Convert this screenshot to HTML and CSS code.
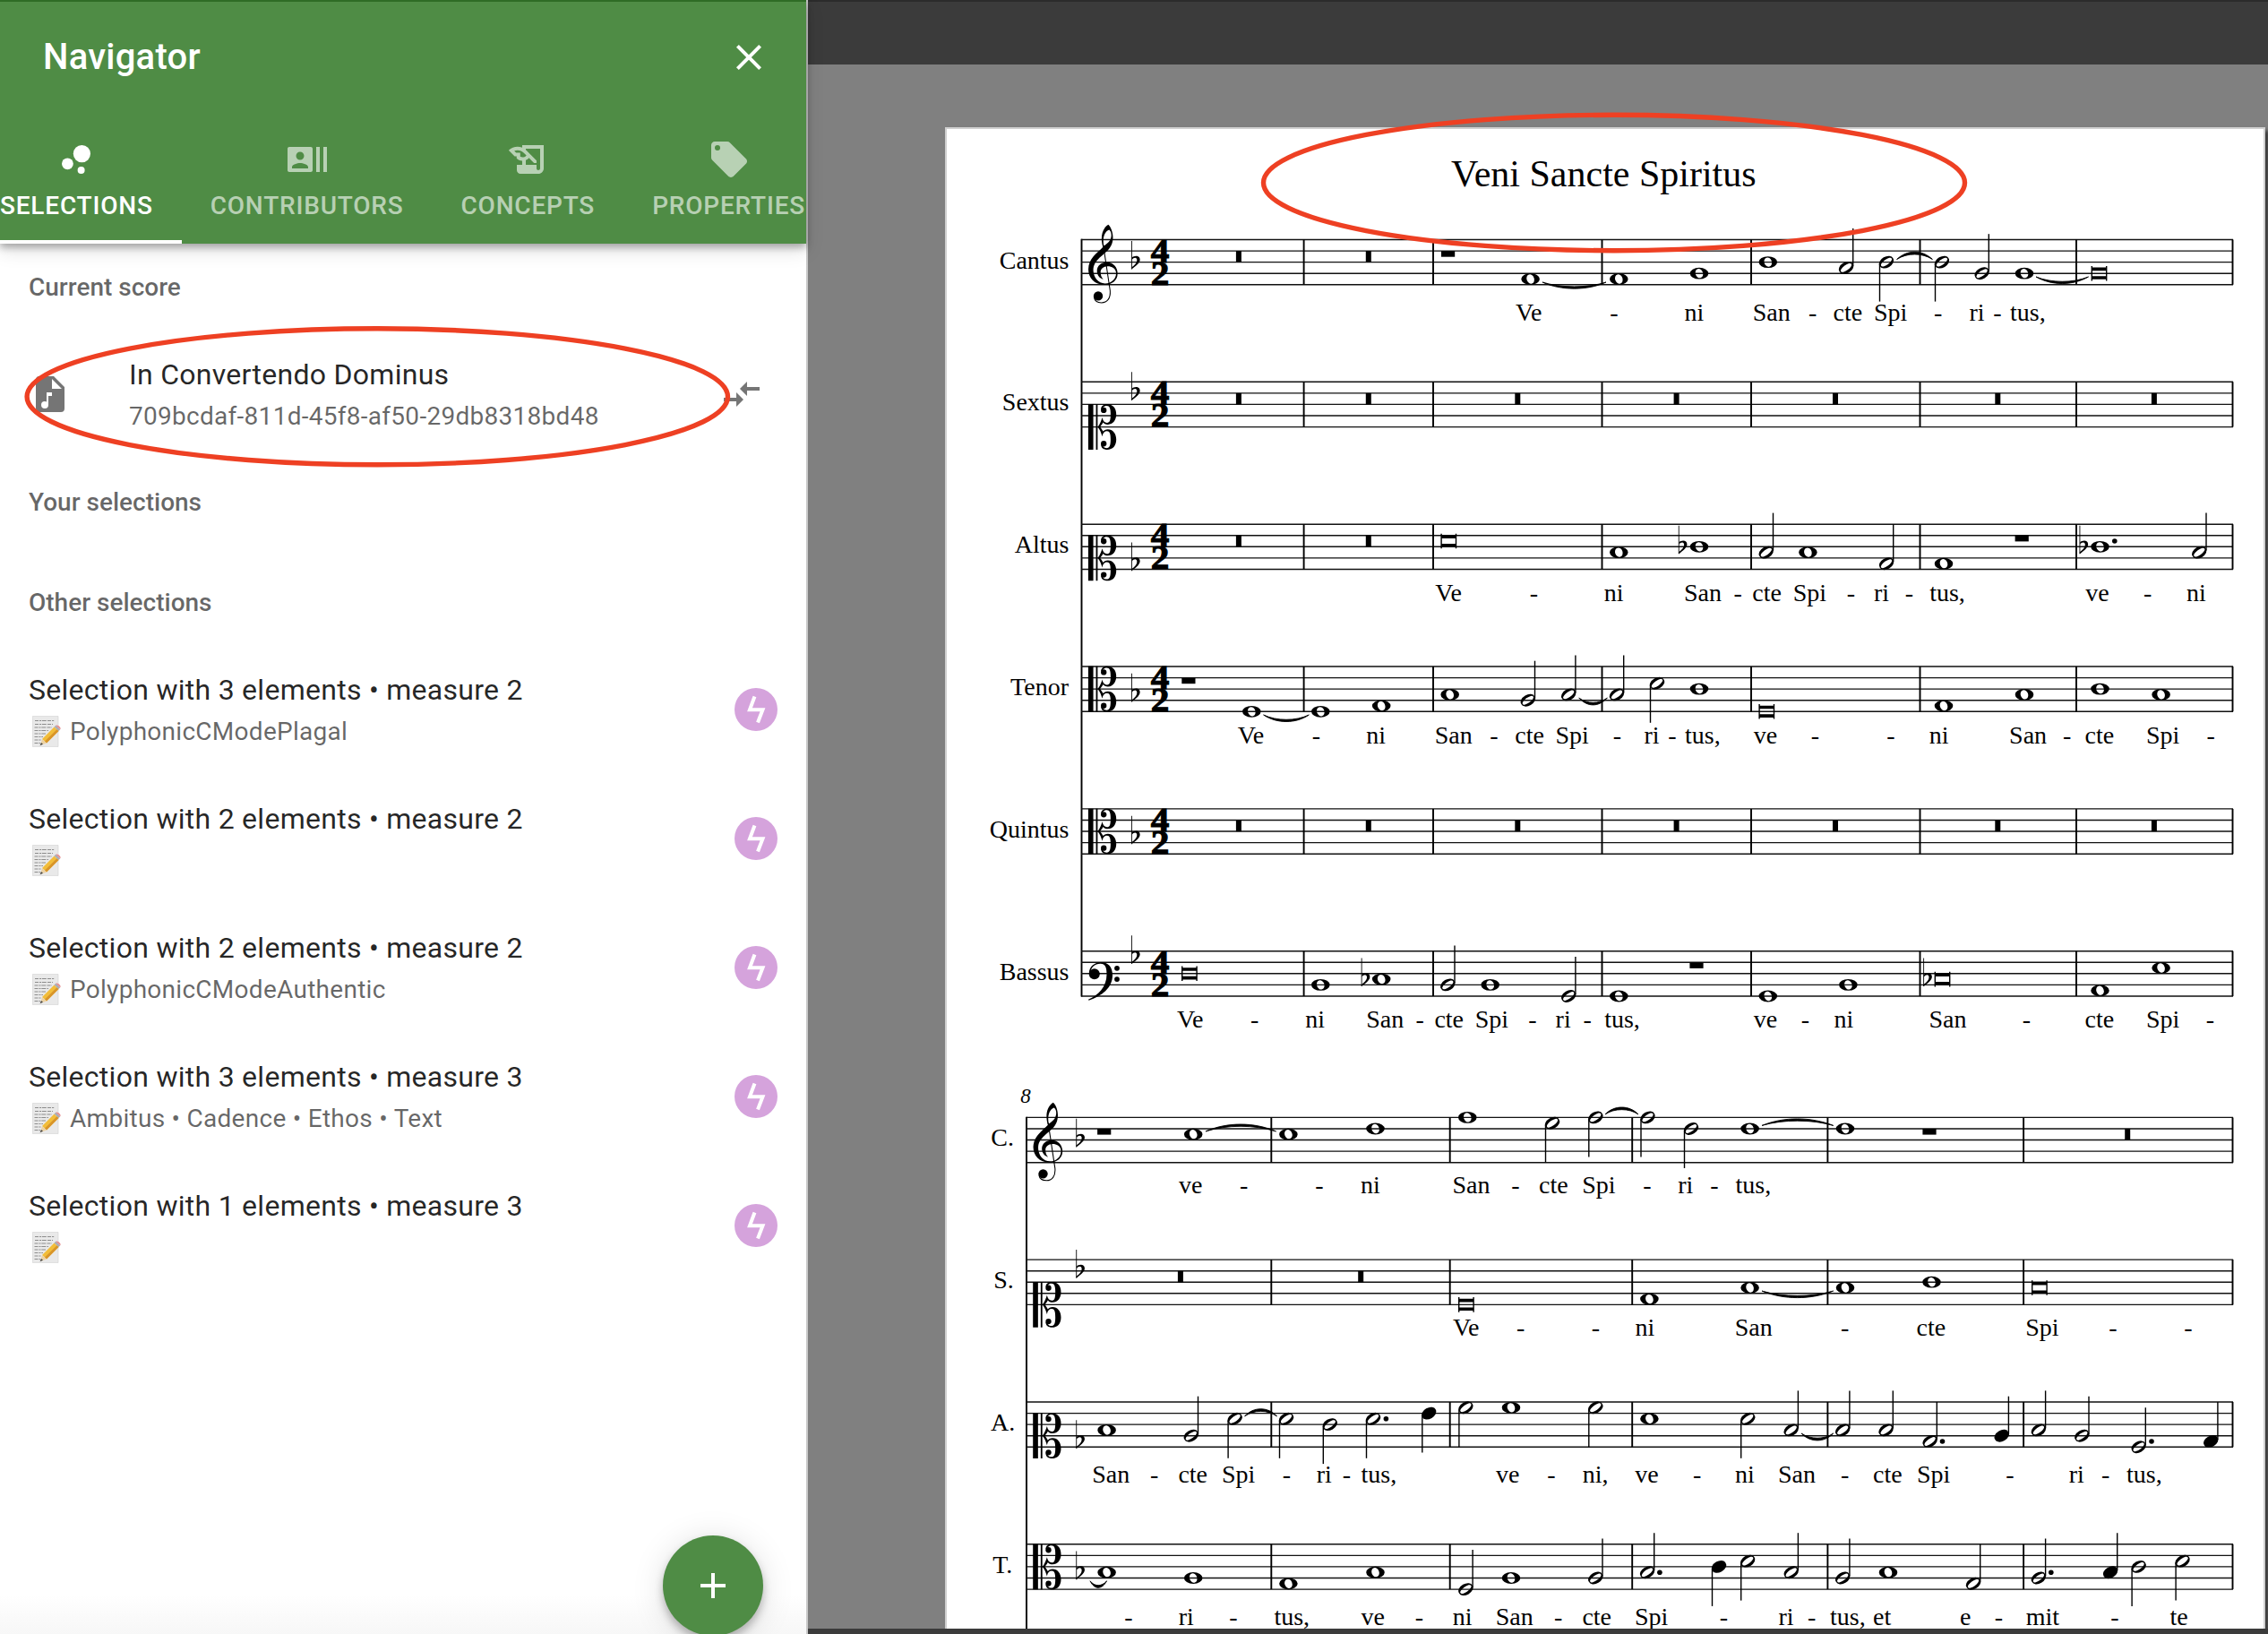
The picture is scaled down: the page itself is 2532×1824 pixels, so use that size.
FILE: index.html
```html
<!DOCTYPE html>
<html lang="en">
<head>
<meta charset="utf-8">
<title>Navigator</title>
<link rel="stylesheet" href="styles.css">
</head>
<body>
<svg class="defs" width="0" height="0" aria-hidden="true">
  <defs>
    <!-- note heads, centred on the origin -->
    <path id="w" fill-rule="evenodd" d="M-10.3 0A10.3 6.4 0 1 0 10.3 0A10.3 6.4 0 1 0 -10.3 0ZM-1.7 -4.9A5.2 3.9 70 1 0 1.7 4.9A5.2 3.9 70 1 0 -1.7 -4.9Z"/>
    <path id="h" fill-rule="evenodd" d="M-7.4 4.3A8.6 5.6 -30 1 0 7.4 -4.3A8.6 5.6 -30 1 0 -7.4 4.3ZM-5.8 4.2A7.2 2.6 -36 1 0 5.8 -4.2A7.2 2.6 -36 1 0 -5.8 4.2Z"/>
    <path id="q" d="M-7.4 4.3A8.6 5.6 -30 1 0 7.4 -4.3A8.6 5.6 -30 1 0 -7.4 4.3Z"/>
    <path id="up" d="M7 -2V-44H8.4V-2Z"/>
    <path id="dn" d="M-8.2 2V44H-6.8V2Z"/>
    <g id="hu"><use href="#h"/><use href="#up"/></g>
    <g id="hd"><use href="#h"/><use href="#dn"/></g>
    <g id="qu"><use href="#q"/><use href="#up"/></g>
    <g id="qd"><use href="#q"/><use href="#dn"/></g>
    <path id="b" d="M-8.9 -8.3h1.4v1.7h15v-1.7h1.4v16.6h-1.4v-1.7h-15v1.7h-1.4ZM-7.5 -3V3H7.5V-3Z" fill-rule="evenodd"/>
    <circle id="d" r="2.8"/>
    <!-- rests hang from the second staff line -->
    <path id="br" d="M-3 12.6h6v12.6h-6Z"/>
    <path id="wr" d="M-7.6 12.6h15.2v6.6h-15.2Z"/>
    <g id="f" transform="scale(.333)">
      <path d="M0 -71h2.6v95h-2.6Z"/>
      <path d="M2 -15C8 -22 29 -25 29 -8C29 3 14 14 1 24V18C12 10 19 2 19 -6C19 -18 8 -16 2 -8Z"/>
    </g>
    <g id="gc" transform="scale(.333) translate(-59 -67)">
      <path fill-rule="evenodd" d="M109 92C101 66 102 32 127 17C141 30 148 62 137 86C126 112 88 126 78 156C71 186 90 214 116 214C140 214 154 196 153 178C152 162 138 156 125 156C110 156 101 165 101 176C101 186 104 194 110 200C98 197 89 186 89 172C89 155 103 143 122 143C144 143 158 160 158 181C158 203 140 218 115 218C80 218 60 195 60 166C61 130 88 114 109 92ZM112 88C107 66 112 40 130 34C139 42 139 58 132 70C127 78 119 83 112 88Z"/>
      <path fill="none" stroke="#000" stroke-width="3.2" d="M110 85L133 238C135 264 123 278.500 104 278.500C92 278.500 81 272 79 260"/>
      <circle cx="93" cy="256" r="15.500"/>
    </g>
    <g id="ch">
      <path d="M43 -58C42 -70 52 -76 64 -76C82 -76 94 -64 94 -42C94 -22 82 -8 66 -8C58 -8 53 -11 50 -15C46 -8 42 -3 39 1H31C40 -10 44 -22 47 -32C49 -20 55 -14 63 -14C72 -14 75 -22 75 -42C75 -62 72 -71 62 -71C57 -71 53 -69 51 -66Z"/>
      <circle cx="52" cy="-56" r="9.500"/>
    </g>
    <g id="cc" transform="scale(.333)">
      <path d="M0 -76h17v152h-17ZM26 -76h5.500v152h-5.500Z"/>
      <use href="#ch"/><use href="#ch" transform="scale(1 -1)"/>
    </g>
    <g id="fc">
      <circle cx="6.800" cy=".4" r="6"/>
      <path d="M.8 0C.8 -8 7 -12.600 14 -12.600C22 -12.600 27 -8 27 2C27 16 15 25 .5 30L0 29C11 24 20.500 15 20.500 1C20.500 -7 19 -11 13.500 -11C7 -11 2.500 -7 2.500 0Z"/>
      <circle cx="32" cy="-6" r="2.900"/><circle cx="32" cy="6.300" r="2.900"/>
    </g>
    <g id="ts" class="meter" transform="scale(1.1 1)"><text x="0" y="25">4</text><text x="0" y="50.200">2</text></g>
    <!-- staves with their bar lines -->
    <g id="s1" class="lines">
      <path d="M1207 0H2493M1207 12.600H2493M1207 25.100H2493M1207 37.700H2493M1207 50.300H2493"/>
      <path class="bar" d="M1455.600 0V50.300M1600 0V50.300M1788.500 0V50.300M1955 0V50.300M2143.500 0V50.300M2318 0V50.300M2492.500 0V50.300"/>
    </g>
    <g id="s2" class="lines">
      <path d="M1146 0H2493M1146 12.600H2493M1146 25.100H2493M1146 37.700H2493M1146 50.300H2493"/>
      <path class="bar" d="M1419.300 0V50.300M1618.700 0V50.300M1822.200 0V50.300M2040.400 0V50.300M2259.100 0V50.300M2492.500 0V50.300"/>
    </g>
    <!-- interface icons -->
    <g id="memo">
      <path fill="#e9e9e9" stroke="#d2d2d2" stroke-width=".6" d="M.5 .5H29V34.500H.5Z"/>
      <path fill="none" stroke="#8d8d8d" stroke-width="1" stroke-dasharray="4 1 2 .8 5 1.200" d="M3 5.500H25M3 9.500H23M2.500 13H22M2.500 16.500H18M2.500 20H15M2.500 23.500H12M2.500 27H10M2.500 30.500H9"/>
      <path fill="#f2bd3a" d="M11 26L24.500 12.500L29.500 17L16 30.500Z"/>
      <path fill="#d8942a" d="M14 28.500L27.500 15.200L29.500 17L16 30.500Z"/>
      <path fill="#ecd2a4" d="M11 26L16 30.500L9 33Z"/>
      <path fill="#444" d="M10 30L12 31.800L8.500 33.300Z"/>
      <path fill="#a9adb5" d="M24.500 12.500L26.300 10.800L31.200 15.300L29.500 17Z"/>
      <path fill="#e58a8c" d="M26.300 10.800C28 9.500 33 13 31.200 15.300Z"/>
    </g>
    <g id="bolt">
      <circle cx="24" cy="24" r="24" fill="#d5a3dc"/>
      <path fill="none" stroke="#fff" stroke-width="4" d="M22.500 9.500L17 24.200H31.500L26 38.500"/>
    </g>
  </defs>
</svg>

<div class="app">
  <aside class="nav">
    <header class="nav-head">
      <div class="nav-title">
        <h1>Navigator</h1>
        <svg class="icon" viewBox="0 0 24 24"><path d="M19 6.410L17.590 5 12 10.590 6.410 5 5 6.410 10.590 12 5 17.590 6.410 19 12 13.410 17.590 19 19 17.590 13.410 12z"/></svg>
      </div>
      <nav class="tabs">
        <div class="tab active">
          <svg class="icon" viewBox="0 0 24 24"><circle cx="7.200" cy="14.400" r="3.200"/><circle cx="14.800" cy="18" r="2"/><circle cx="15.200" cy="8.800" r="4.800"/></svg>
          <span>SELECTIONS</span>
        </div>
        <div class="tab">
          <svg class="icon" viewBox="0 0 24 24"><path d="M21 5v14h2V5h-2zm-4 14h2V5h-2v14zM14 5H2c-.55 0-1 .45-1 1v12c0 .55.45 1 1 1h12c.55 0 1-.45 1-1V6c0-.55-.45-1-1-1zM8 7.750c1.240 0 2.250 1.010 2.250 2.250S9.240 12.250 8 12.250 5.750 11.240 5.750 10 6.760 7.750 8 7.750zM12.500 17h-9v-.75c0-1.500 3-2.250 4.500-2.250s4.500.75 4.500 2.250V17z"/></svg>
          <span>CONTRIBUTORS</span>
        </div>
        <div class="tab">
          <svg class="icon" viewBox="0 0 24 24"><path d="M9 4v1.380c-.83-.33-1.720-.5-2.610-.5-1.790 0-3.580.68-4.950 2.050l3.330 3.330h1.110v1.110c.86.86 1.980 1.310 3.110 1.360V15H6v3c0 1.100.9 2 2 2h10c1.660 0 3-1.340 3-3V4H9zm-1.110 6.410V8.260H5.610L4.570 7.220a5.070 5.070 0 0 1 1.820-.34c1.340 0 2.590.52 3.540 1.460l1.410 1.410-.2.2c-.51.51-1.190.8-1.920.8-.47 0-.93-.12-1.330-.34zM19 17c0 .55-.45 1-1 1s-1-.45-1-1v-2h-6v-2.590c.57-.23 1.100-.57 1.560-1.030l.2-.2L15.590 14H17v-1.410l-6-5.970V6h8v11z"/></svg>
          <span>CONCEPTS</span>
        </div>
        <div class="tab">
          <svg class="icon" viewBox="0 0 24 24"><path d="M5.500,7A1.500,1.500 0 0,1 4,5.500A1.500,1.500 0 0,1 5.500,4A1.500,1.500 0 0,1 7,5.500A1.500,1.500 0 0,1 5.500,7M21.410,11.580L12.410,2.580C12.050,2.220 11.550,2 11,2H4C2.890,2 2,2.890 2,4V11C2,11.550 2.220,12.050 2.590,12.410L11.580,21.410C11.950,21.770 12.450,22 13,22C13.550,22 14.050,21.770 14.410,21.410L21.410,14.410C21.780,14.050 22,13.550 22,13C22,12.440 21.770,11.940 21.410,11.580Z"/></svg>
          <span>PROPERTIES</span>
        </div>
      </nav>
    </header>

    <section class="group">
      <h2>Current score</h2>
      <div class="item current">
        <svg class="icon" viewBox="0 0 24 24"><path d="M14,2H6A2,2 0 0,0 4,4V20A2,2 0 0,0 6,22H18A2,2 0 0,0 20,20V8L14,2M13,13H11V18A2,2 0 0,1 9,20A2,2 0 0,1 7,18A2,2 0 0,1 9,16C9.400,16 9.700,16.100 10,16.300V11H13V13M13,9V3.500L18.500,9H13Z"/></svg>
        <div class="text"><p>In Convertendo Dominus</p><small>709bcdaf-811d-45f8-af50-29db8318bd48</small></div>
        <svg class="icon" viewBox="0 0 24 24"><path d="M9.010 14H2v2h7.010v3L13 15l-3.990-4v3zm5.980-1v-3H22V8h-7.010V5L11 9l3.990 4z"/></svg>
      </div>
    </section>
    <section class="group yours"><h2>Your selections</h2></section>
    <section class="group">
      <h2>Other selections</h2>
      <div class="item">
        <div class="text"><p>Selection with 3 elements • measure 2</p><small><svg class="memo" viewBox="0 0 34 36"><use href="#memo"/></svg>PolyphonicCModePlagal</small></div>
        <svg class="badge" viewBox="0 0 48 48"><use href="#bolt"/></svg>
      </div>
      <div class="item">
        <div class="text"><p>Selection with 2 elements • measure 2</p><small><svg class="memo" viewBox="0 0 34 36"><use href="#memo"/></svg></small></div>
        <svg class="badge" viewBox="0 0 48 48"><use href="#bolt"/></svg>
      </div>
      <div class="item">
        <div class="text"><p>Selection with 2 elements • measure 2</p><small><svg class="memo" viewBox="0 0 34 36"><use href="#memo"/></svg>PolyphonicCModeAuthentic</small></div>
        <svg class="badge" viewBox="0 0 48 48"><use href="#bolt"/></svg>
      </div>
      <div class="item">
        <div class="text"><p>Selection with 3 elements • measure 3</p><small><svg class="memo" viewBox="0 0 34 36"><use href="#memo"/></svg>Ambitus • Cadence • Ethos • Text</small></div>
        <svg class="badge" viewBox="0 0 48 48"><use href="#bolt"/></svg>
      </div>
      <div class="item">
        <div class="text"><p>Selection with 1 elements • measure 3</p><small><svg class="memo" viewBox="0 0 34 36"><use href="#memo"/></svg></small></div>
        <svg class="badge" viewBox="0 0 48 48"><use href="#bolt"/></svg>
      </div>
    </section>
    <div class="fab"><svg class="icon" viewBox="0 0 24 24"><path d="M19 13h-6v6h-2v-6H5v-2h6V5h2v6h6v2z"/></svg></div>
  </aside>

  <main class="viewer">
    <div class="toolbar"></div>
    <div class="canvas">
      <div class="sheet">
        <svg class="score" viewBox="1057 144 1470 1674">
          <text class="title" x="1620" y="208.300">Veni Sancte Spiritus</text>
          <path class="edge" d="M1207.500 266.800V1112.600M1146 1246.700V1820"/>

          <g transform="translate(0 267.500)">
            <text class="part" x="1193.500" y="32.500">Cantus</text>
            <use href="#s1"/><use href="#gc" transform="translate(1214.700 0)"/><use href="#f" transform="translate(1263 25.100)"/><use href="#ts" x="1295"/>
            <use href="#br" x="1382.900"/><use href="#br" x="1527.800"/><use href="#wr" x="1616.600"/>
            <use href="#w" x="1708.600" y="44"/><use href="#w" x="1807.300" y="44"/><use href="#w" x="1897" y="37.700"/>
            <use href="#w" x="1973.800" y="25.100"/><use href="#hu" x="2061" y="31.400"/><use href="#hd" x="2106" y="25.100"/>
            <use href="#hd" x="2168" y="25.100"/><use href="#hu" x="2212.600" y="37.700"/><use href="#w" x="2260" y="37.700"/><use href="#b" x="2343.500" y="37.700"/>
            <path class="tie" d="M1722 47.500C1742 57 1773 57 1793 47.500C1773 54 1742 54 1722 47.500ZM2117.600 22C2129 11 2146 11 2157.400 22C2146 14.500 2129 14.500 2117.600 22ZM2273 41.500C2290 51.500 2314.500 51.500 2331.500 41.500C2314.500 48.500 2290 48.500 2273 41.500Z"/>
            <text class="lyric" y="90.200"><tspan x="1692">Ve</tspan><tspan class="h" x="1802">-</tspan><tspan x="1880.500">ni</tspan><tspan x="1956.800">San</tspan><tspan class="h" x="2023.600">-</tspan><tspan x="2046.500">cte</tspan><tspan x="2092">Spi</tspan><tspan class="h" x="2163.700">-</tspan><tspan x="2198.500">ri</tspan><tspan class="h" x="2229.900">-</tspan><tspan x="2244">tus,</tspan></text>
          </g>

          <g transform="translate(0 426.300)">
            <text class="part" x="1193.500" y="31.500">Sextus</text>
            <use href="#s1"/><use href="#cc" transform="translate(1214.900 50.300)"/><use href="#f" transform="translate(1263 12.600)"/><use href="#ts" x="1295"/>
            <use href="#br" x="1382.900"/><use href="#br" x="1527.800"/><use href="#br" x="1694.300"/><use href="#br" x="1871.600"/><use href="#br" x="2049"/><use href="#br" x="2230.300"/><use href="#br" x="2404.900"/>
          </g>

          <g transform="translate(0 585.200)">
            <text class="part" x="1193.500" y="31.500">Altus</text>
            <use href="#s1"/><use href="#cc" transform="translate(1214.900 37.700)"/><use href="#f" transform="translate(1263 44)"/><use href="#ts" x="1295"/>
            <use href="#br" x="1382.900"/><use href="#br" x="1527.800"/><use href="#b" x="1617.300" y="18.800"/>
            <use href="#w" x="1807.300" y="31.400"/><use href="#f" transform="translate(1873.800 25.100)"/><use href="#w" x="1897" y="25.100"/>
            <use href="#hu" x="1971.800" y="31.400"/><use href="#w" x="2018.400" y="31.400"/><use href="#hu" x="2106" y="44"/>
            <use href="#w" x="2170" y="44"/><use href="#wr" x="2257.200"/>
            <use href="#f" transform="translate(2321.500 25.100)"/><use href="#w" x="2344.500" y="25.100"/><use href="#d" x="2360.800" y="18.800"/><use href="#hu" x="2455.300" y="31.400"/>
            <text class="lyric" y="85.600"><tspan x="1602.300">Ve</tspan><tspan class="h" x="1712.500">-</tspan><tspan x="1790.700">ni</tspan><tspan x="1880">San</tspan><tspan class="h" x="1940.200">-</tspan><tspan x="1956.300">cte</tspan><tspan x="2001.800">Spi</tspan><tspan class="h" x="2066.300">-</tspan><tspan x="2092">ri</tspan><tspan class="h" x="2131.500">-</tspan><tspan x="2154.200">tus,</tspan><tspan x="2328.300">ve</tspan><tspan class="h" x="2397.700">-</tspan><tspan x="2441">ni</tspan></text>
          </g>

          <g transform="translate(0 744)">
            <text class="part" x="1193" y="31.500">Tenor</text>
            <use href="#s1"/><use href="#cc" transform="translate(1214.900 25.100)"/><use href="#f" transform="translate(1263 31.400)"/><use href="#ts" x="1295"/>
            <use href="#wr" x="1326.900"/><use href="#w" x="1397.300" y="50.300"/><use href="#w" x="1474.300" y="50.300"/><use href="#w" x="1542.200" y="44"/>
            <use href="#w" x="1618.700" y="31.400"/><use href="#hu" x="1705.800" y="37.700"/><use href="#hu" x="1751.200" y="31.400"/>
            <use href="#hu" x="1805" y="31.400"/><use href="#hd" x="1850" y="18.800"/><use href="#w" x="1897" y="25.100"/>
            <use href="#b" x="1972.300" y="50.300"/><use href="#w" x="2170" y="44"/><use href="#w" x="2260" y="31.400"/><use href="#w" x="2344.500" y="25.100"/><use href="#w" x="2412.600" y="31.400"/>
            <path class="tie" d="M1410.600 54C1425 64 1447 64 1461.300 54C1447 61 1425 61 1410.600 54ZM1762.700 35C1772 45.500 1785 45.500 1794.400 35C1785 42 1772 42 1762.700 35Z"/>
            <text class="lyric" y="86"><tspan x="1381.700">Ve</tspan><tspan class="h" x="1469.500">-</tspan><tspan x="1525.200">ni</tspan><tspan x="1601.800">San</tspan><tspan class="h" x="1668">-</tspan><tspan x="1691.300">cte</tspan><tspan x="1736.500">Spi</tspan><tspan class="h" x="1805.400">-</tspan><tspan x="1835.400">ri</tspan><tspan class="h" x="1866.800">-</tspan><tspan x="1881">tus,</tspan><tspan x="1957.700">ve</tspan><tspan class="h" x="2026.500">-</tspan><tspan class="h" x="2110.900">-</tspan><tspan x="2153.700">ni</tspan><tspan x="2243.100">San</tspan><tspan class="h" x="2307.600">-</tspan><tspan x="2327.600">cte</tspan><tspan x="2396">Spi</tspan><tspan class="h" x="2468.200">-</tspan></text>
          </g>

          <g transform="translate(0 902.900)">
            <text class="part" x="1193.500" y="32">Quintus</text>
            <use href="#s1"/><use href="#cc" transform="translate(1214.900 25.100)"/><use href="#f" transform="translate(1263 31.400)"/><use href="#ts" x="1295"/>
            <use href="#br" x="1382.900"/><use href="#br" x="1527.800"/><use href="#br" x="1694.300"/><use href="#br" x="1871.600"/><use href="#br" x="2049"/><use href="#br" x="2230.300"/><use href="#br" x="2404.900"/>
          </g>

          <g transform="translate(0 1061.700)">
            <text class="part" x="1193.500" y="32">Bassus</text>
            <use href="#s1"/><use href="#fc" transform="translate(1215 25.100)"/><use href="#f" transform="translate(1263 6.300)"/><use href="#ts" x="1295"/>
            <use href="#b" x="1327.900" y="25.100"/><use href="#w" x="1474.300" y="37.700"/><use href="#f" transform="translate(1519.700 31.400)"/><use href="#w" x="1542.200" y="31.400"/>
            <use href="#hu" x="1616.300" y="37.700"/><use href="#w" x="1663.700" y="37.700"/><use href="#hu" x="1751.200" y="50.300"/>
            <use href="#w" x="1807.300" y="50.300"/><use href="#wr" x="1894"/><use href="#w" x="1973.800" y="50.300"/><use href="#w" x="2063.400" y="37.700"/>
            <use href="#f" transform="translate(2147.200 31.400)"/><use href="#b" x="2168.500" y="31.400"/><use href="#w" x="2344.500" y="44"/><use href="#w" x="2412.600" y="18.800"/>
            <text class="lyric" y="85.200"><tspan x="1314">Ve</tspan><tspan class="h" x="1400.600">-</tspan><tspan x="1457.300">ni</tspan><tspan x="1525.200">San</tspan><tspan class="h" x="1585.200">-</tspan><tspan x="1601.400">cte</tspan><tspan x="1646.700">Spi</tspan><tspan class="h" x="1711">-</tspan><tspan x="1736.600">ri</tspan><tspan class="h" x="1772.200">-</tspan><tspan x="1791.200">tus,</tspan><tspan x="1957.700">ve</tspan><tspan class="h" x="2015.500">-</tspan><tspan x="2047.400">ni</tspan><tspan x="2153.500">San</tspan><tspan class="h" x="2262.500">-</tspan><tspan x="2327.600">cte</tspan><tspan x="2396">Spi</tspan><tspan class="h" x="2467.300">-</tspan></text>
          </g>

          <text class="number" x="1139.300" y="1231.300">8</text>
          <g transform="translate(0 1247.400)">
            <text class="abbr" x="1106.300" y="32">C.</text>
            <use href="#s2"/><use href="#gc" transform="translate(1153.200 0)"/><use href="#f" transform="translate(1201.300 25.100)"/>
            <use href="#wr" x="1232.700"/><use href="#w" x="1332.200" y="18.800"/><use href="#w" x="1438.400" y="18.800"/><use href="#w" x="1535.500" y="12.600"/>
            <use href="#w" x="1638.300" y="0"/><use href="#hd" x="1733" y="6.300"/><use href="#hd" x="1781.300" y="0"/>
            <use href="#hd" x="1839.500" y="0"/><use href="#hd" x="1888" y="12.600"/><use href="#w" x="1953.600" y="12.600"/>
            <use href="#w" x="2060" y="12.600"/><use href="#wr" x="2154"/><use href="#br" x="2375.200"/>
            <path class="tie" d="M1346 15.500C1370 5 1400 5 1424.500 15.500C1400 8 1370 8 1346 15.500ZM1792 -3.500C1802 -14 1819 -14 1829 -3.500C1819 -10.500 1802 -10.500 1792 -3.500ZM1967 9C1991 -1 2022 -1 2046.700 9C2022 2 1991 2 1967 9Z"/>
            <text class="lyric" y="84.800"><tspan x="1316.100">ve</tspan><tspan class="h" x="1388.600">-</tspan><tspan class="h" x="1472.800">-</tspan><tspan x="1519">ni</tspan><tspan x="1621.400">San</tspan><tspan class="h" x="1691.900">-</tspan><tspan x="1718">cte</tspan><tspan x="1766.300">Spi</tspan><tspan class="h" x="1839">-</tspan><tspan x="1873.300">ri</tspan><tspan class="h" x="1913.800">-</tspan><tspan x="1937.500">tus,</tspan></text>
          </g>

          <g transform="translate(0 1406.100)">
            <text class="abbr" x="1109.300" y="31.500">S.</text>
            <use href="#s2"/><use href="#cc" transform="translate(1153.200 50.300)"/><use href="#f" transform="translate(1201.300 12.600)"/>
            <use href="#br" x="1317.900"/><use href="#br" x="1519.200"/><use href="#b" x="1636.900" y="50.300"/>
            <use href="#w" x="1841.400" y="44"/><use href="#w" x="1953.600" y="31.400"/><use href="#w" x="2060" y="31.400"/><use href="#w" x="2156.500" y="25.100"/><use href="#b" x="2276.900" y="31.400"/>
            <path class="tie" d="M1967 35C1991 45 2022 45 2046.700 35C2022 42 1991 42 1967 35Z"/>
            <text class="lyric" y="84.800"><tspan x="1622">Ve</tspan><tspan class="h" x="1697.600">-</tspan><tspan class="h" x="1781.300">-</tspan><tspan x="1825.400">ni</tspan><tspan x="1936.700">San</tspan><tspan class="h" x="2059.600">-</tspan><tspan x="2139.600">cte</tspan><tspan x="2261.300">Spi</tspan><tspan class="h" x="2358.900">-</tspan><tspan class="h" x="2442.800">-</tspan></text>
          </g>

          <g transform="translate(0 1565)">
            <text class="abbr" x="1106" y="32">A.</text>
            <use href="#s2"/><use href="#cc" transform="translate(1153.200 37.700)"/><use href="#f" transform="translate(1201.300 44)"/>
            <use href="#w" x="1235.600" y="31.400"/><use href="#hu" x="1329.800" y="37.700"/><use href="#hd" x="1378.600" y="18.800"/>
            <use href="#hd" x="1436" y="18.800"/><use href="#hd" x="1484.800" y="25.100"/><use href="#hd" x="1533" y="18.800"/><use href="#d" x="1547.400" y="18.800"/><use href="#qd" x="1595.300" y="12.600"/>
            <use href="#hd" x="1636.400" y="6.300"/><use href="#w" x="1687" y="6.300"/><use href="#hd" x="1781.300" y="6.300"/>
            <use href="#w" x="1841.400" y="18.800"/><use href="#hd" x="1951.200" y="18.800"/><use href="#hu" x="1999.700" y="31.400"/>
            <use href="#hu" x="2057.200" y="31.400"/><use href="#hu" x="2105.600" y="31.400"/><use href="#hu" x="2154.600" y="44"/><use href="#d" x="2168.500" y="44"/><use href="#qu" x="2234.700" y="37.700"/>
            <use href="#hu" x="2275.900" y="31.400"/><use href="#hu" x="2324.300" y="37.700"/><use href="#hu" x="2387.600" y="50.300"/><use href="#d" x="2402" y="44"/><use href="#qu" x="2468.200" y="44"/>
            <path class="tie" d="M1389.600 16C1399 5 1416 5 1425.500 16C1416 8.500 1399 8.500 1389.600 16ZM2011 35C2021 45.500 2037 45.500 2046.700 35C2037 42 2021 42 2011 35Z"/>
            <text class="lyric" y="90.400"><tspan x="1219.200">San</tspan><tspan class="h" x="1288.700">-</tspan><tspan x="1315.400">cte</tspan><tspan x="1364">Spi</tspan><tspan class="h" x="1436.500">-</tspan><tspan x="1469.800">ri</tspan><tspan class="h" x="1503.400">-</tspan><tspan x="1519.500">tus,</tspan><tspan x="1670.100">ve</tspan><tspan class="h" x="1732">-</tspan><tspan x="1766.800">ni,</tspan><tspan x="1825.300">ve</tspan><tspan class="h" x="1894.600">-</tspan><tspan x="1937.100">ni</tspan><tspan x="1985">San</tspan><tspan class="h" x="2059.600">-</tspan><tspan x="2091.100">cte</tspan><tspan x="2140">Spi</tspan><tspan class="h" x="2243.800">-</tspan><tspan x="2309.800">ri</tspan><tspan class="h" x="2350.700">-</tspan><tspan x="2374">tus,</tspan></text>
          </g>

          <g transform="translate(0 1723.800)">
            <text class="abbr" x="1108.200" y="32">T.</text>
            <use href="#s2"/><use href="#cc" transform="translate(1153.200 25.100)"/><use href="#f" transform="translate(1201.300 31.400)"/>
            <use href="#w" x="1235.600" y="31.400"/><use href="#w" x="1332.200" y="37.700"/><use href="#w" x="1438.400" y="44"/><use href="#w" x="1535.500" y="31.400"/>
            <use href="#hu" x="1636.400" y="50.300"/><use href="#w" x="1687" y="37.700"/><use href="#hu" x="1781.300" y="37.700"/>
            <use href="#hu" x="1839" y="31.400"/><use href="#d" x="1852.900" y="31.400"/><use href="#qd" x="1919" y="25.100"/><use href="#hd" x="1951.200" y="18.800"/><use href="#hu" x="1999.700" y="31.400"/>
            <use href="#hu" x="2057.200" y="37.700"/><use href="#w" x="2108" y="31.400"/><use href="#hu" x="2203" y="44"/>
            <use href="#hu" x="2275.900" y="37.700"/><use href="#d" x="2289.800" y="31.400"/><use href="#qu" x="2356" y="31.400"/><use href="#hd" x="2387.600" y="25.100"/><use href="#hd" x="2436.600" y="18.800"/>
            <path class="tie" d="M1217 41C1222 51 1230 51 1235.600 41C1230 47.500 1222 47.500 1217 41Z"/>
            <text class="lyric" y="89.800"><tspan class="h" x="1260">-</tspan><tspan x="1315.800">ri</tspan><tspan class="h" x="1377">-</tspan><tspan x="1422.400">tus,</tspan><tspan x="1519.400">ve</tspan><tspan class="h" x="1584.300">-</tspan><tspan x="1621.800">ni</tspan><tspan x="1669.700">San</tspan><tspan class="h" x="1739.700">-</tspan><tspan x="1766.400">cte</tspan><tspan x="1824.900">Spi</tspan><tspan class="h" x="1924.400">-</tspan><tspan x="1985.500">ri</tspan><tspan class="h" x="2022.700">-</tspan><tspan x="2043">tus,</tspan><tspan x="2091.100">et</tspan><tspan x="2188">e</tspan><tspan class="h" x="2231.300">-</tspan><tspan x="2261.800">mit</tspan><tspan class="h" x="2360.800">-</tspan><tspan x="2422.400">te</tspan></text>
          </g>
        </svg>
      </div>
    </div>
    <div class="statusbar"></div>
  </main>

  <svg class="marks" viewBox="0 0 2532 1824">
    <ellipse cx="421.300" cy="442.800" rx="391.200" ry="76"/>
    <ellipse cx="1802" cy="204" rx="391.500" ry="75.700"/>
  </svg>
</div>
</body>
</html>
```
FILE: styles.css
```css
* { box-sizing: border-box; }
body { margin: 0; font-family: Roboto, "Liberation Sans", sans-serif; }
h1, h2, p { margin: 0; font-weight: 400; }
.defs { display: block; position: absolute; }

.app {
  position: relative;
  display: flex;
  width: 2532px;
  height: 1824px;
  overflow: hidden;
}

.icon { width: 48px; height: 48px; flex: none; fill: currentColor; display: block; }

/* navigator */
.nav {
  position: relative;
  width: 902px;
  flex: none;
  border-right: 2px solid #c9c9c9;
  background: linear-gradient(#fff 1780px, #f7f7f7 1824px);
  color: rgba(0, 0, 0, .87);
}
.nav-head {
  height: 272px;
  display: flex;
  flex-direction: column;
  justify-content: space-between;
  background: #4f8c45;
  border-top: 2px solid #2f6c26;
  color: #fff;
  box-shadow: 0 4px 8px rgba(0, 0, 0, .3), 0 8px 20px rgba(0, 0, 0, .12);
}
.nav-title {
  height: 124px;
  padding: 0 40px 0 48px;
  display: flex;
  align-items: center;
  justify-content: space-between;
}
.nav-title h1 { font-size: 40px; line-height: 60px; font-weight: 500; letter-spacing: .25px; }
.tabs { height: 144px; width: 900px; display: flex; overflow: hidden; }
.tab {
  flex: none;
  padding: 26px 32px 0;
  display: flex;
  flex-direction: column;
  align-items: center;
  gap: 10px;
  color: rgba(255, 255, 255, .6);
  font-size: 28px;
  line-height: 36px;
  font-weight: 500;
  letter-spacing: .8px;
}
.tab:first-child { margin-left: -32px; }
.tab.active { color: #fff; border-bottom: 4px solid #fff; }

.group h2 {
  height: 96px;
  padding: 1px 0 0 32px;
  font-size: 28px;
  line-height: 96px;
  font-weight: 500;
  color: rgba(0, 0, 0, .6);
}
.group.yours { margin-bottom: 16px; }
.item {
  height: 144px;
  padding: 0 32px;
  display: flex;
  align-items: center;
  justify-content: space-between;
}
.item .icon { color: #757575; }
.current { padding-right: 48px; }
.current .text { flex: 1; margin-left: 64px; }
.text p { font-size: 32px; line-height: 45px; letter-spacing: .28px; }
.text small {
  height: 40px;
  margin-top: 4px;
  display: flex;
  align-items: center;
  font-size: 28px;
  line-height: 40px;
  letter-spacing: .28px;
  color: rgba(0, 0, 0, .6);
}
.memo { width: 34px; height: 36px; margin: 0 8px 0 4px; flex: none; }
.badge { width: 48px; height: 48px; flex: none; }
.fab {
  position: absolute;
  left: 740px;
  top: 1714px;
  width: 112px;
  height: 112px;
  border-radius: 50%;
  display: flex;
  align-items: center;
  justify-content: center;
  background: #4f8c45;
  color: #fff;
  box-shadow: 0 6px 10px rgba(0, 0, 0, .25), 0 4px 36px rgba(0, 0, 0, .13);
}

/* score viewer */
.viewer { flex: 1; display: flex; flex-direction: column; background: #808080; }
.toolbar { height: 72px; background: #3b3b3b; border-top: 2px solid #2b2b2b; }
.canvas { height: 1746px; padding: 70px 3px 0 153px; overflow: hidden; }
.sheet {
  width: 1474px;
  height: 1690px;
  border: 2px solid #d0d0d0;
  background: #fff;
  box-shadow: 4px 4px 4px rgba(0, 0, 0, .55);
}
.statusbar { height: 6px; background: #3b3b3b; }
.score { display: block; width: 1470px; height: 1674px; font-family: "Liberation Serif", serif; }
.title { font-size: 42px; }
.part, .abbr, .lyric { font-size: 28px; }
.part { text-anchor: end; }
.lyric .h { text-anchor: middle; }
.number { font-size: 23px; font-style: italic; }
.meter { font-size: 37.500px; font-weight: 700; text-anchor: middle; stroke: #000; stroke-width: 1; }
.meter text { transform: scaleX(1); }
.lines { fill: none; stroke: #111; stroke-width: 1.400; }
.lines .bar, .edge { fill: none; stroke: #000; stroke-width: 1.900; }
.tie { stroke: #000; stroke-width: .9; }

.marks { position: absolute; inset: 0; width: 2532px; height: 1824px; fill: none; stroke: #ee4023; stroke-width: 5.400; }
```
